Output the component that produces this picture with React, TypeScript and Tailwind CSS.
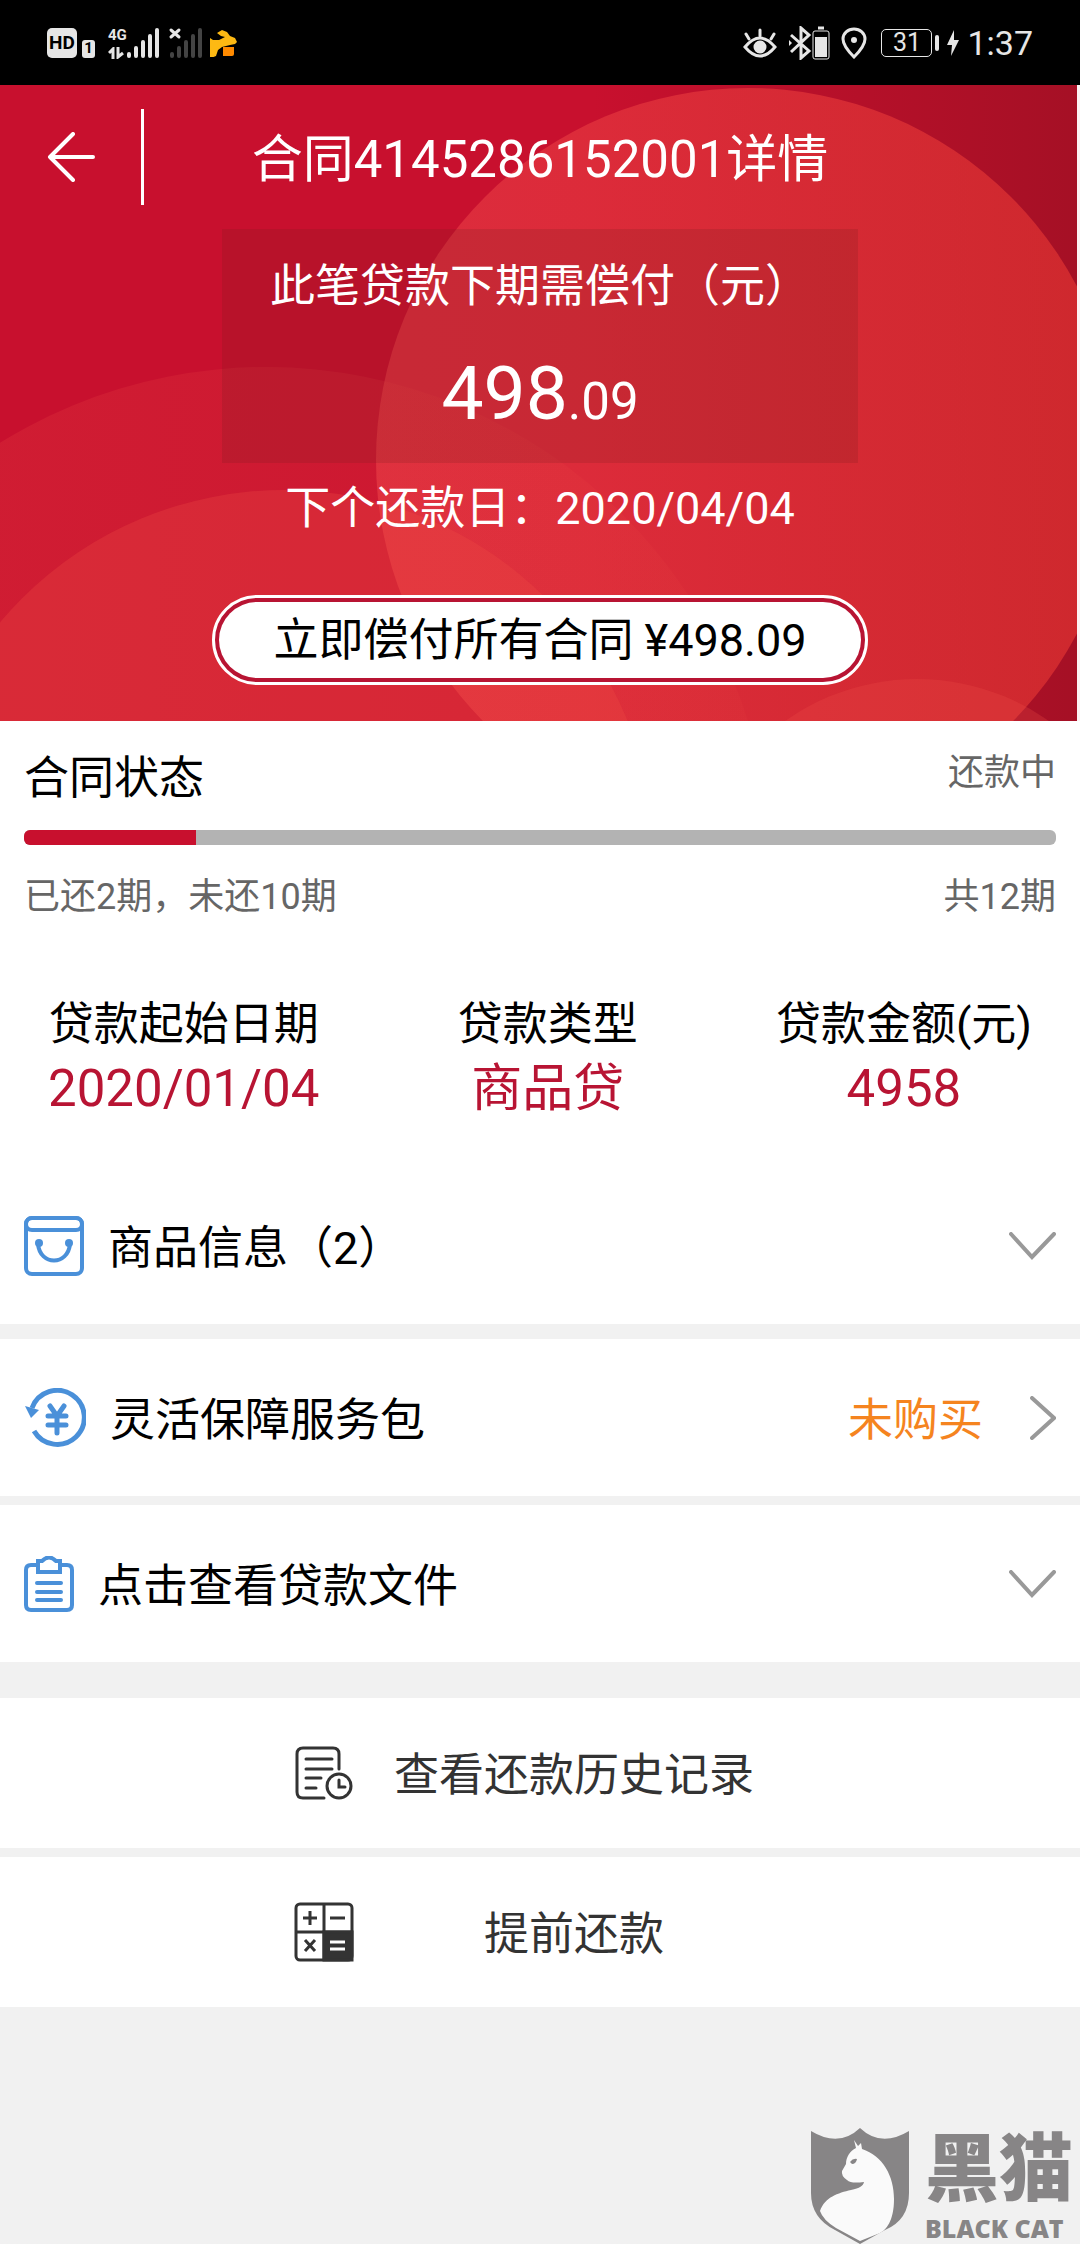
import React from "react";

// 每一行入口的 Props
interface InfoRowProps {
    icon: React.ReactNode;
    label: string;
    value?: string;
    arrow: "down" | "right";
}

interface ActionRowProps {
    icon: React.ReactNode;
    label: string;
}

// 合同数据
const contract = {
    id: "4145286152001",
    paid: 2,
    total: 12,
    nextDate: "2020/04/04",
};

const summary = [
    { label: "贷款起始日期", value: "2020/01/04" },
    { label: "贷款类型", value: "商品贷" },
    { label: "贷款金额(元)", value: "4958" },
];

/* ---------- 状态栏 ---------- */

function StatusBar() {
    return (
        <div className="flex h-[85px] items-center justify-between bg-black pl-[47px] pr-[47px] text-[#e6e6e6]">
            <div className="flex items-center">
                <span className="flex h-[30px] w-[30px] items-center justify-center rounded-[5px] bg-[#e6e6e6] text-[19px] font-bold leading-none text-black">
                    HD
                </span>
                <span className="ml-[5px] mt-3 flex h-[18px] w-[13px] items-center justify-center rounded-[3px] bg-[#e6e6e6] text-[15px] font-bold leading-none text-black">
                    1
                </span>
                <div className="ml-[13px] flex h-[32px] flex-col justify-between">
                    <span className="text-[15px] font-bold leading-[16px]">4G</span>
                    <svg width="16" height="12" viewBox="0 0 16 12" fill="none" stroke="currentColor" strokeWidth="3">
                        <path d="M5 12V2L1 6M10 0v10l5-4" />
                    </svg>
                </div>
                <svg width="32" height="32" viewBox="0 0 32 32" stroke="currentColor" strokeWidth="4" strokeLinecap="round">
                    <path d="M2 27v2M9 21v8M16 15v14M23 9v20M30 3v26" />
                </svg>
                <svg className="ml-[8px]" width="36" height="32" viewBox="0 0 36 32" strokeWidth="4" strokeLinecap="round">
                    <path d="M5 27v2M12 21v8M19 15v14M26 9v20M33 3v26" stroke="#444" />
                    <path d="M4 3l8 7M12 3l-8 7" stroke="#e6e6e6" strokeWidth="3" />
                </svg>
                <svg className="ml-[6px]" width="28" height="28" viewBox="0 0 28 28">
                    <path d="M1 9l3 2h6l6-3-4-1-4-3 5-3 5 2 3 4 5 2 2 4-2 2-5 1-8 2-4 3-2 6-5 2H1z" fill="#fdb913" />
                    <path d="M14 18h11v7q0 2-2 2h-9z" fill="#ff8a00" />
                </svg>
            </div>

            <div className="flex items-center">
                <svg width="34" height="32" viewBox="0 0 34 32" fill="none" stroke="currentColor" strokeWidth="3" strokeLinecap="round">
                    <path d="M2 20q15-18 30 0-15 18-30 0z" />
                    <circle cx="17" cy="20" r="5" fill="currentColor" />
                    <path d="M17 3v6M3 7l3 5M31 7l-3 5" />
                </svg>
                <svg className="ml-[11px]" width="42" height="34" viewBox="0 0 42 34" fill="none" stroke="currentColor" strokeWidth="3">
                    <path d="M3 9l18 16-8 7V2l8 7L3 26" />
                    <path d="M1 14v6l3-3z" fill="currentColor" stroke="none" />
                    <rect x="25" y="5" width="16" height="28" rx="2" strokeWidth="1" />
                    <path d="M30 2h6" />
                    <rect x="27" y="11" width="12" height="20" fill="currentColor" stroke="none" />
                </svg>
                <svg className="ml-[11px]" width="26" height="32" viewBox="0 0 26 32" fill="none" stroke="currentColor" strokeWidth="3">
                    <path d="M13 30Q2 19 2 12a11 10 0 0 1 22 0q0 7-11 18z" />
                    <circle cx="13" cy="13" r="3" fill="currentColor" stroke="none" />
                </svg>
                <span className="ml-[14px] flex h-7 w-[51px] items-center justify-center rounded-[5px] border border-[#e6e6e6] text-[25px] leading-none">
                    31
                </span>
                <span className="ml-[3px] h-4 w-1 rounded-sm bg-[#e6e6e6]" />
                <svg className="ml-2" width="12" height="26" viewBox="0 0 12 26" fill="currentColor">
                    <path d="M7 0L0 15h5l-1 11 8-16H7z" />
                </svg>
                <span className="ml-[8px] text-[34px] leading-none">1:37</span>
            </div>
        </div>
    );
}

/* ---------- 顶部红色背景 ---------- */

function HeroBackground() {
    return (
        <svg className="absolute inset-0 h-full w-full" viewBox="0 0 1080 636" preserveAspectRatio="none">
            <defs>
                <linearGradient id="base" x1="0" x2="1">
                    <stop offset="0.55" stopColor="#c8102e" />
                    <stop offset="1" stopColor="#a51025" />
                </linearGradient>
                <linearGradient id="fade" x1="0" x2="1">
                    <stop offset="0.2" stopColor="#f05046" stopOpacity="0.2" />
                    <stop offset="1" stopColor="#f05046" stopOpacity="0.08" />
                </linearGradient>
                <linearGradient id="big" x1="0" x2="1">
                    <stop offset="0" stopColor="#e83c46" stopOpacity="0.64" />
                    <stop offset="1" stopColor="#e63632" stopOpacity="0.64" />
                </linearGradient>
            </defs>
            <rect width="1080" height="636" fill="url(#base)" />
            <circle cx="748" cy="375" r="372" fill="url(#big)" />
            <circle cx="266" cy="787" r="505" fill="url(#fade)" />
            <circle cx="284" cy="776" r="371" fill="#f05046" fillOpacity="0.28" />
            <circle cx="917" cy="822" r="228" fill="#f05046" fillOpacity="0.25" />
            <rect x="1077" width="3" height="636" fill="#fdf3f4" />
        </svg>
    );
}

/* ---------- 图标 ---------- */

function BagIcon() {
    return (
        <svg width="60" height="60" viewBox="0 0 60 60" fill="none" stroke="#4a90d9" strokeWidth="4">
            <rect x="2" y="2" width="56" height="56" rx="6" />
            <rect x="2" y="2" width="56" height="12" rx="6" />
            <path d="M14 28c2 22 30 22 32 0" />
            <circle cx="15" cy="27" r="4" fill="#4a90d9" stroke="none" />
            <circle cx="45" cy="27" r="4" fill="#4a90d9" stroke="none" />
        </svg>
    );
}

function RefundIcon() {
    return (
        <svg width="62" height="60" viewBox="0 0 62 60" fill="none" stroke="#4a90d9" strokeWidth="5">
            <path d="M8 20A27 27 0 1 1 10 43" />
            <path d="M1 18l14 4-8 8z" fill="#4a90d9" stroke="none" />
            <path d="M26 18l7 10 7-10M33 28v17M24 28h18M24 37h18" strokeLinecap="round" />
        </svg>
    );
}

function ClipboardIcon() {
    return (
        <svg width="50" height="56" viewBox="0 0 50 56" fill="none" stroke="#4a90d9" strokeWidth="4">
            <path d="M13 9H7Q2 9 2 14v35q0 5 5 5h36q5 0 5-5V14q0-5-5-5h-6" />
            <path d="M14 16V5h4q7-7 14 0h4v11z" />
            <path d="M13 27h24M13 36h24M13 44h24" strokeLinecap="round" />
        </svg>
    );
}

function HistoryIcon() {
    return (
        <svg width="60" height="54" viewBox="0 0 60 54" fill="none" stroke="#333" strokeWidth="3" strokeLinecap="round">
            <path d="M30 52H9q-6 0-6-6V8q0-6 6-6h30q6 0 6 6v15" />
            <path d="M12 13h26M12 23h26M12 32h15M12 42h10" />
            <circle cx="45" cy="40" r="12" />
            <path d="M45 34v7h6" />
        </svg>
    );
}

function CalcIcon() {
    return (
        <svg width="60" height="60" viewBox="0 0 60 60" fill="none" stroke="#333" strokeWidth="3">
            <rect x="2" y="2" width="56" height="56" rx="4" />
            <path d="M30 2v56M2 30h56" />
            <path d="M30 30h28v28H30z" fill="#333" />
            <path d="M9 16h14M16 9v14M36 16h15M11 38l10 11M21 38L11 49" />
            <path d="M36 40h15M36 47h15" stroke="#fff" />
        </svg>
    );
}

function Arrow({ direction }: { direction: "down" | "right" }) {
    if (direction === "down") {
        return (
            <svg width="47" height="28" viewBox="0 0 47 28" fill="none" stroke="#999" strokeWidth="4" strokeLinecap="round">
                <path d="M2 2l21 23L45 2" />
            </svg>
        );
    }
    return (
        <svg width="26" height="44" viewBox="0 0 26 44" fill="none" stroke="#999" strokeWidth="4" strokeLinecap="round">
            <path d="M2 2l22 20L2 42" />
        </svg>
    );
}

/* ---------- 行 ---------- */

function InfoRow({ icon, label, value, arrow }: InfoRowProps) {
    return (
        <button type="button" className="flex h-[157px] w-full items-center bg-white px-6 text-[45px] text-black">
            {icon}
            <span className="ml-6 pt-[6px]">{label}</span>
            {value && <span className="ml-auto mr-[47px] pt-[6px] text-[#f5841f]">{value}</span>}
            <span className={value ? "" : "ml-auto"}>
                <Arrow direction={arrow} />
            </span>
        </button>
    );
}

function ActionRow({ icon, label }: ActionRowProps) {
    return (
        <button type="button" className="flex h-[150px] w-full items-center justify-center gap-10 bg-white pr-8 text-[45px] text-[#333]">
            {icon}
            <span className="w-[360px] pt-[6px] text-center">{label}</span>
        </button>
    );
}

// 右下角水印
function Watermark() {
    return (
        <div className="mt-auto flex items-end justify-end gap-4 text-[#878586]">
            <svg width="98" height="116" viewBox="0 0 98 116">
                <path d="M0 3q28 17 49-3 21 20 49 3v62q0 27-24 37l-25 14-25-14Q0 90 0 65z" fill="currentColor" />
                <path
                    d="M43 12l4 6 3-3 1 6c21 7 32 27 32 50 0 22-8 31-14 34l-20 8-24-13Q12 92 9 83c5-14 18-18 31-21 9-2 12-4 13-8-8 1-14 1-17-2q-6-4-5-9l4-7c0-7 4-13 10-16z"
                    fill="#fafafa"
                />
                <path d="M39 34q3-4 7-3-1 5-5 5z" fill="currentColor" />
            </svg>
            <div className="flex w-[155px] flex-col items-start pb-[3px]">
                <span className="text-[74px] font-black leading-[90px]">黑猫</span>
                <span className="whitespace-nowrap font-['Open_Sans'] text-[25px] font-extrabold leading-[26px]">BLACK CAT</span>
            </div>
        </div>
    );
}

export default function App() {
    // 还款进度百分比
    const progress = (contract.paid / contract.total) * 100;

    return (
        <div className="flex min-h-screen flex-col bg-[#f1f1f1] font-[Roboto,'Noto_Sans_CJK_SC',sans-serif]">
            <StatusBar />

            {/* 顶部：下期还款金额 */}
            <header className="relative h-[636px] text-white">
                <HeroBackground />
                <div className="relative flex flex-col items-center">
                    <div className="flex h-36 w-full items-center">
                        <button type="button" aria-label="返回" className="flex w-[141px] justify-center">
                            <svg width="48" height="50" viewBox="0 0 48 50" fill="none" stroke="currentColor" strokeWidth="4" strokeLinecap="round" strokeLinejoin="round">
                                <path d="M26 2L3 25l23 23M3 25h43" />
                            </svg>
                        </button>
                        <span className="h-24 w-[3px] bg-white" />
                        <h1 className="flex-1 pr-36 pt-[6px] text-center text-[51px] leading-[72px]">合同{contract.id}详情</h1>
                    </div>

                    <div className="flex h-[234px] w-[636px] flex-col items-center bg-[#781e1e]/20 pt-7">
                        <p className="text-[45px] leading-[60px]">此笔贷款下期需偿付（元）</p>
                        <p className="mt-[26px] text-[75px] leading-[100px]">
                            498<span className="text-[51px]">.09</span>
                        </p>
                    </div>

                    <p className="mt-4 text-[45px] leading-[60px]">下个还款日：{contract.nextDate}</p>

                    <button
                        type="button"
                        className="mt-14 rounded-full border-[3px] border-white bg-[#b81433] p-1 text-[45px] text-black"
                    >
                        <span className="block w-[642px] rounded-full bg-white pt-[2px] leading-[74px]">立即偿付所有合同 ¥498.09</span>
                    </button>
                </div>
            </header>

            {/* 合同状态 */}
            <section className="bg-white px-6 pt-7">
                <div className="flex items-start justify-between">
                    <h2 className="text-[45px] leading-[60px]">合同状态</h2>
                    <span className="text-[36px] leading-[48px] text-[#666]">还款中</span>
                </div>
                <div className="mt-[21px] h-[15px] overflow-hidden rounded-md bg-[#b3b3b3]">
                    <div className="h-full bg-[#c8102e]" style={{ width: `${progress}%` }} />
                </div>
                <div className="mt-7 flex justify-between text-[36px] leading-[48px] text-[#666]">
                    <span>已还{contract.paid}期，未还{contract.total - contract.paid}期</span>
                    <span>共{contract.total}期</span>
                </div>
            </section>

            {/* 贷款概要 */}
            <section className="flex justify-between bg-white px-12 pb-[46px] pt-[72px] text-center">
                {summary.map((item) => (
                    <div key={item.label}>
                        <p className="text-[45px] leading-[64px] text-black">{item.label}</p>
                        <p className="text-[51px] leading-[64px] text-[#b81433]">{item.value}</p>
                    </div>
                ))}
            </section>

            <InfoRow icon={<BagIcon />} label="商品信息（2）" arrow="down" />
            <div className="mt-[15px]">
                <InfoRow icon={<RefundIcon />} label="灵活保障服务包" value="未购买" arrow="right" />
            </div>
            <div className="mt-[9px]">
                <InfoRow icon={<ClipboardIcon />} label="点击查看贷款文件" arrow="down" />
            </div>

            {/* 底部操作 */}
            <div className="mt-9 flex flex-col gap-[9px]">
                <ActionRow icon={<HistoryIcon />} label="查看还款历史记录" />
                <ActionRow icon={<CalcIcon />} label="提前还款" />
            </div>

            <Watermark />
        </div>
    );
}
